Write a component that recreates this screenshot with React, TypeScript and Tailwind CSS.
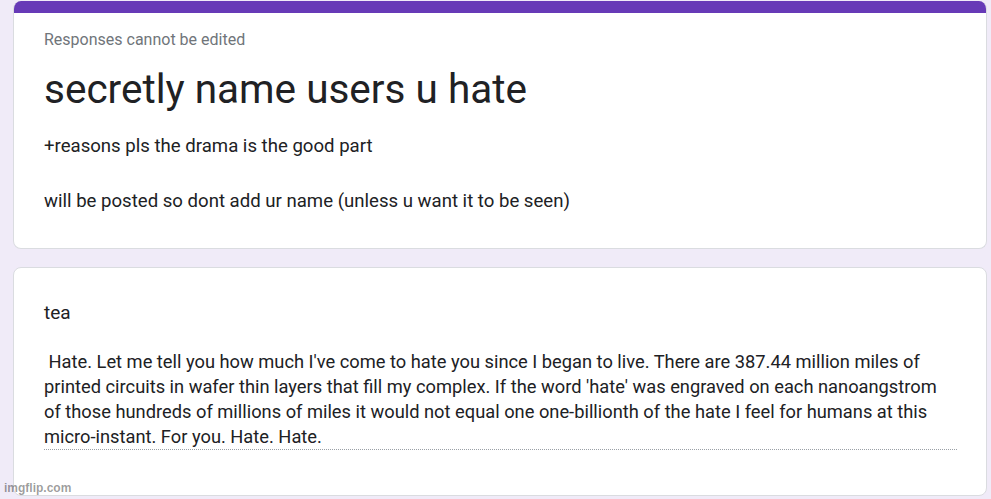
import React from 'react';

const bodyLines = [
  " Hate. Let me tell you how much I've come to hate you since I began to live. There are 387.44 million miles of",
  "printed circuits in wafer thin layers that fill my complex. If the word 'hate' was engraved on each nanoangstrom",
  'of those hundreds of millions of miles it would not equal one one-billionth of the hate I feel for humans at this',
  'micro-instant. For you. Hate. Hate.',
];

const App: React.FC = () => {
  return (
    <div
      className="relative w-[991px] h-[499px] overflow-hidden bg-[#f0ebf8] pl-[13px] pr-[4px] pt-px"
      style={{ fontFamily: 'Roboto, "Noto Sans", Arial, sans-serif' }}
    >
      {/* header card */}
      <div className="h-[248px] rounded-lg overflow-hidden bg-white border border-[#dadce0] border-t-0">
        <div className="h-[12px] bg-[#673ab7]" />
        <div className="pl-[30px] pr-[30px]">
          <div className="mt-[17px] text-[16px] leading-[20px] text-[#70757a]">
            Responses cannot be edited
          </div>
          <h1 className="mt-[15px] text-[40.5px] leading-[48px] text-[#202124]">
            secretly name users u hate
          </h1>
          <p className="mt-[21px] text-[18.6px] leading-[24px] text-[#202124]">
            +reasons pls the drama is the good part
          </p>
          <p className="mt-[31px] text-[18.6px] leading-[24px] text-[#202124]">
            will be posted so dont add ur name (unless u want it to be seen)
          </p>
        </div>
      </div>

      {/* answer card */}
      <div className="mt-[18px] h-[229px] rounded-lg bg-white border border-[#dadce0] pl-[30px] pr-[29px] pt-[33px]">
        <div className="text-[19px] leading-[24px] text-[#202124]">tea</div>
        <div className="mt-[24px] text-[18.3px] leading-[25px] text-[#202124] border-b border-dotted border-[#9aa0a6]">
          {bodyLines.map((line, i) => (
            <span key={i} className="block whitespace-pre">
              {line}
            </span>
          ))}
        </div>
      </div>

      <div
        className="absolute left-[4px] bottom-[4px] text-[12px] leading-[14px] font-bold text-black/40"
        style={{ fontFamily: '"Liberation Sans", Arial, sans-serif' }}
      >
        imgflip.com
      </div>
    </div>
  );
};

export default App;
